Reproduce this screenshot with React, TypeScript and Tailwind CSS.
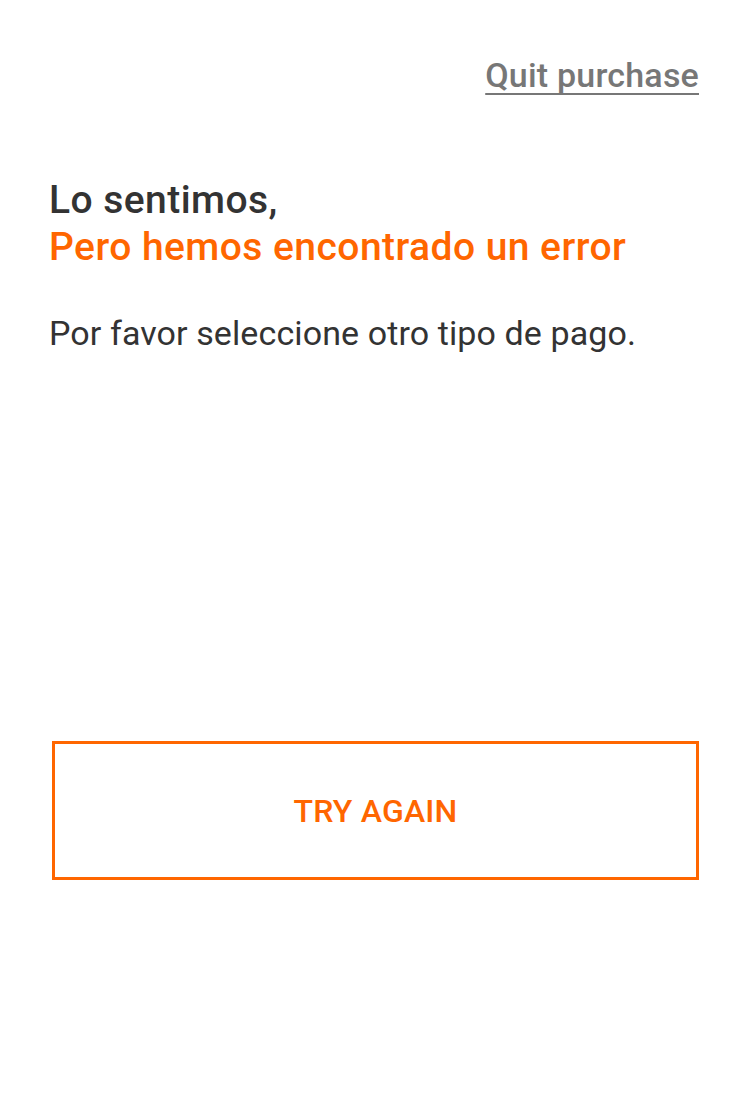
import React from 'react';

export default function App() {
  return (
    <div className="min-h-[1108px] w-full bg-white pl-[49px] pr-[51px] pt-[54px] text-[#333333] font-['Roboto','Liberation_Sans',sans-serif]">
      {/* Top: quit link */}
      <div className="flex justify-end">
        <a
          href="#"
          className="text-[34px] leading-[42px] font-medium tracking-[0.2px] text-[#777777] underline decoration-2 underline-offset-[6px] [text-decoration-skip-ink:none]"
        >
          Quit purchase
        </a>
      </div>

      {/* Message */}
      <h1 className="mt-[81px] text-[39px] leading-[47px] font-medium tracking-[0.45px]">
        <span className="block">Lo sentimos,</span>
        <span className="block text-[#ff6600]">Pero hemos encontrado un error</span>
      </h1>

      <p className="mt-[41px] text-[34px] leading-[42px] font-normal tracking-[0.1px]">
        Por favor seleccione otro tipo de pago.
      </p>

      {/* Action */}
      <div className="mt-[387px] pl-[3px]">
        <button
          type="button"
          className="flex h-[139px] w-full items-center justify-center border-[3px] border-[#ff6600] bg-white text-[32px] font-medium uppercase tracking-[0.2px] text-[#ff6600]"
        >
          Try again
        </button>
      </div>
    </div>
  );
}
